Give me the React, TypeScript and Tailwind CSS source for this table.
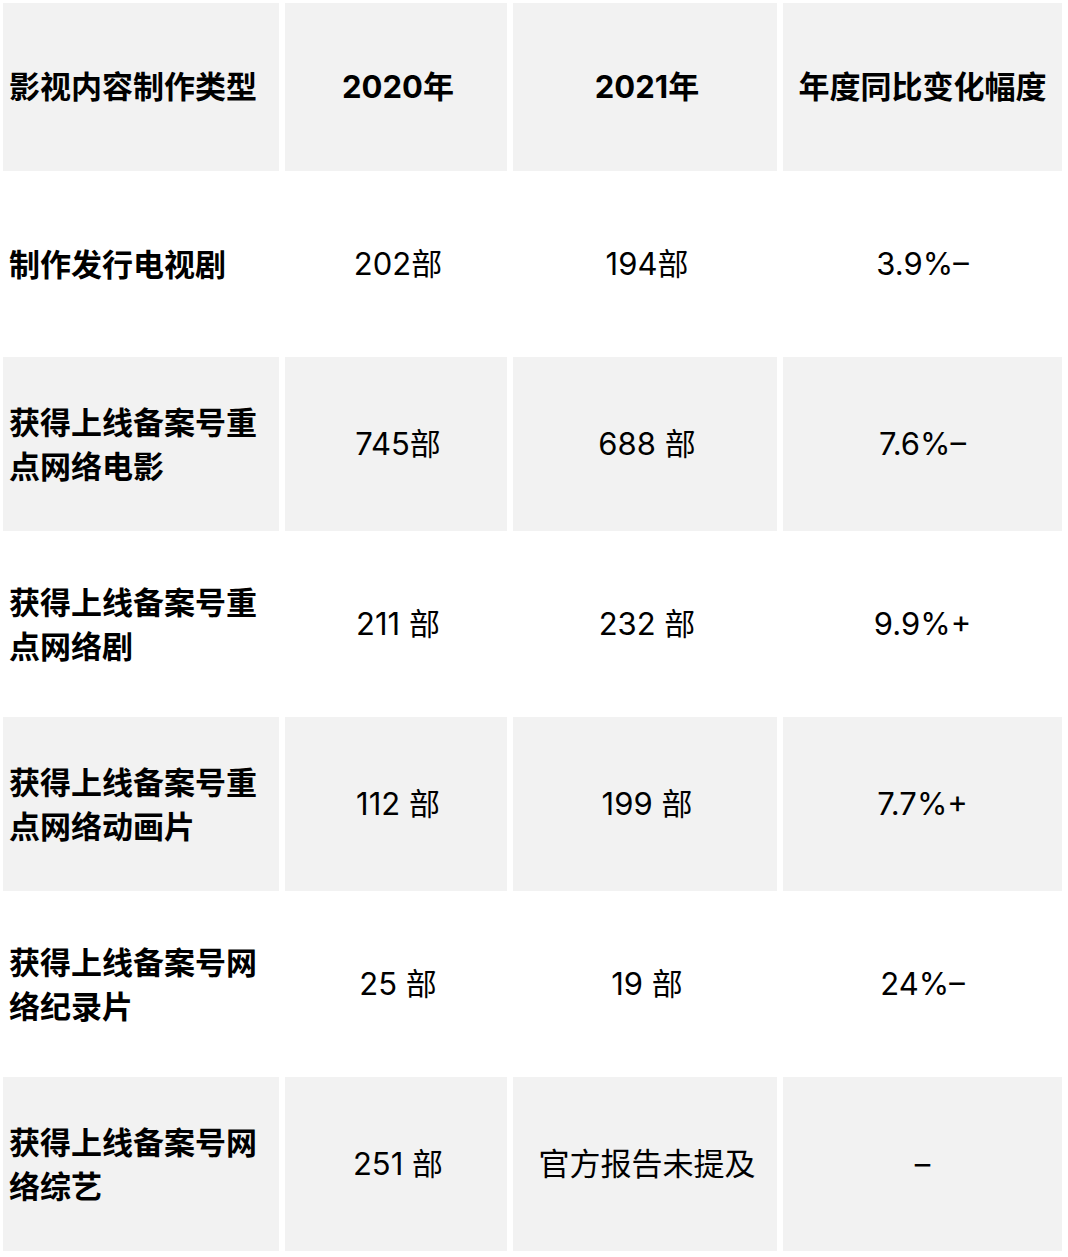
const rows: { name: string; y2020: string; y2021: string; change: string; shaded: boolean }[] = [
  { name: '制作发行电视剧', y2020: '202部', y2021: '194部', change: '3.9%–', shaded: false },
  { name: '获得上线备案号重点网络电影', y2020: '745部', y2021: '688 部', change: '7.6%–', shaded: true },
  { name: '获得上线备案号重点网络剧', y2020: '211 部', y2021: '232 部', change: '9.9%+', shaded: false },
  { name: '获得上线备案号重点网络动画片', y2020: '112 部', y2021: '199 部', change: '7.7%+', shaded: true },
  { name: '获得上线备案号网络纪录片', y2020: '25 部', y2021: '19 部', change: '24%–', shaded: false },
  { name: '获得上线备案号网络综艺', y2020: '251 部', y2021: '官方报告未提及', change: '–', shaded: true },
]

const font = { fontFamily: 'Inter, "Noto Sans CJK SC", sans-serif' }

export default function App() {
  return (
    <div className="bg-white w-[1068px] h-[1257px] pt-[3px] pl-[3px] text-[31px] text-black" style={font}>
      <div className="grid grid-cols-[276px_222px_264px_279px] gap-[6px]">
        <div className="h-[168px] bg-[#f2f2f2] flex items-center px-[6px] font-bold">影视内容制作类型</div>
        <div className="h-[168px] bg-[#f2f2f2] flex items-center justify-center font-bold pl-[4px]">2020年</div>
        <div className="h-[168px] bg-[#f2f2f2] flex items-center justify-center font-bold pl-[4px]">2021年</div>
        <div className="h-[168px] bg-[#f2f2f2] flex items-center justify-center font-bold">年度同比变化幅度</div>

        {rows.map(r => {
          const bg = r.shaded ? 'bg-[#f2f2f2]' : 'bg-white'
          return (
            <div key={r.name} className="contents">
              <div className={`h-[174px] ${bg} flex items-center px-[6px] pt-[2px] font-bold leading-[44px]`}>{r.name}</div>
              <div className={`h-[174px] ${bg} flex items-center justify-center whitespace-pre pl-[4px]`}>{r.y2020}</div>
              <div className={`h-[174px] ${bg} flex items-center justify-center whitespace-pre pl-[4px]`}>{r.y2021}</div>
              <div className={`h-[174px] ${bg} flex items-center justify-center`}>{r.change}</div>
            </div>
          )
        })}
      </div>
    </div>
  )
}
